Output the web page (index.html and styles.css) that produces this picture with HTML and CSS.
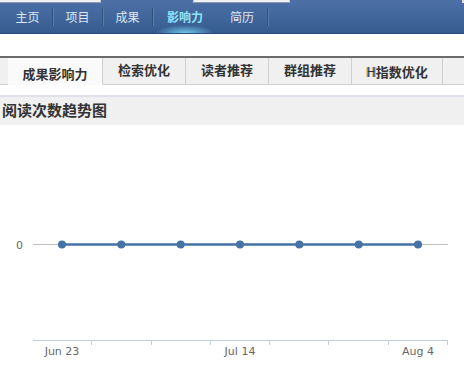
FILE: index.html
```html
<!DOCTYPE html>
<html>
<head>
<meta charset="utf-8">
<link rel="stylesheet" href="styles.css">
</head>
<body>
<div class="nav">
  <div class="strip">
    <span class="gap g1"></span>
    <span class="blk b1"></span>
    <span class="gap g2"></span>
    <span class="blk b2"></span>
    <span class="gap g3"></span>
  </div>
  <ul class="menu">
    <li class="w50">主页</li>
    <li class="w50">项目</li>
    <li class="w50">成果</li>
    <li class="on">影响力</li>
    <li class="w51">简历</li>
  </ul>
</div>
<div class="tabs">
  <span class="pad"></span>
  <span class="tab active">成果影响力</span>
  <span class="tab">检索优化</span>
  <span class="tab">读者推荐</span>
  <span class="tab">群组推荐</span>
  <span class="tab wide"><i class="h">H</i>指数优化</span>
  <span class="rest"></span>
</div>
<div class="sect">阅读次数趋势图</div>
<div class="chart">
  <svg width="464" height="252" viewBox="0 124 464 252">
    <defs>
      <filter id="sh" x="-5%" y="-50%" width="110%" height="300%">
        <feGaussianBlur stdDeviation="1"/>
      </filter>
    </defs>
    <text x="23" y="248" class="ylab" text-anchor="end">0</text>
    <line x1="33" y1="243.5" x2="448" y2="243.5" stroke="#c0c0c0" stroke-width="1"/>
    <polyline points="62,245.5 418,245.5" stroke="#000" stroke-opacity="0.12" stroke-width="4" fill="none" filter="url(#sh)"/>
    <line x1="62" y1="243.5" x2="418" y2="243.5" stroke="#4572a7" stroke-width="2.5"/>
    <g fill="#4572a7">
      <circle cx="62" cy="243.5" r="4"/>
      <circle cx="121.3" cy="243.5" r="4"/>
      <circle cx="180.7" cy="243.5" r="4"/>
      <circle cx="240" cy="243.5" r="4"/>
      <circle cx="299.3" cy="243.5" r="4"/>
      <circle cx="358.7" cy="243.5" r="4"/>
      <circle cx="418" cy="243.5" r="4"/>
    </g>
    <line x1="33" y1="339.5" x2="448" y2="339.5" stroke="#c0d0e0" stroke-width="1"/>
    <g stroke="#c0d0e0" stroke-width="1">
      <line x1="91.5" y1="339" x2="91.5" y2="344"/>
      <line x1="151.5" y1="339" x2="151.5" y2="344"/>
      <line x1="210.5" y1="339" x2="210.5" y2="344"/>
      <line x1="269.5" y1="339" x2="269.5" y2="344"/>
      <line x1="328.5" y1="339" x2="328.5" y2="344"/>
      <line x1="388.5" y1="339" x2="388.5" y2="344"/>
      <line x1="447.5" y1="339" x2="447.5" y2="344"/>
    </g>
    <text x="62" y="354" class="xlab" text-anchor="middle">Jun 23</text>
    <text x="240" y="354" class="xlab" text-anchor="middle">Jul 14</text>
    <text x="418" y="354" class="xlab" text-anchor="middle">Aug 4</text>
  </svg>
</div>
</body>
</html>
```
FILE: styles.css
```css
html, body {
  margin: 0;
  padding: 0;
  background: #fff;
  font-family: "Noto Sans CJK SC", "Noto Sans", sans-serif;
}
.nav {
  height: 34px;
  background: linear-gradient(#4d71a6, #3a5f94 85%, #34598d);
  border-bottom: 1px solid #2d4d7e;
  box-sizing: border-box;
  position: relative;
}
.strip {
  display: flex;
  height: 3px;
}
.gap { background: #f2f2f2; border-bottom: 1px solid #8a99b0; border-right: 1px solid #c8c8c8; box-sizing: border-box; }
.g1 { width: 101px; }
.b1 { width: 92px; }
.g2 { width: 97px; border-left: 1px solid #c8c8c8; }
.b2 { flex: 1; }
.g3 { width: 2px; background: #ddd; border: none; }
.menu {
  list-style: none;
  margin: 0;
  padding: 0 0 0 3px;
  display: flex;
  height: 28px;
  align-items: center;
}
.menu li {
  text-align: center;
  color: #dfe8f4;
  font-size: 12px;
  line-height: 18px;
  border-right: 1px solid #2f507f;
  box-shadow: 1px 0 0 #5a7cae;
  position: relative;
  box-sizing: border-box;
}
.menu li.w50 { width: 50px; }
.menu li.w51 { width: 51px; }
.menu li.on {
  width: 64px;
  color: #8fe4fb;
  font-weight: bold;
  border-right: none;
  box-shadow: none;
}
.menu li.on::after {
  content: "";
  position: absolute;
  left: 2px;
  right: 2px;
  top: 17px;
  height: 8px;
  background: radial-gradient(ellipse at 50% 100%, rgba(120,220,250,0.85), rgba(120,220,250,0) 70%);
}
.tabs {
  margin-top: 22px;
  display: flex;
  height: 29px;
  border-top: 2px solid #6b6b6b;
  box-sizing: border-box;
}
.tabs span {
  background: #f0f0f0;
  border-bottom: 1px solid #cfcfcf;
  box-sizing: border-box;
}
.pad { width: 8px; }
.tab {
  width: 83px;
  border-right: 1px solid #cfcfcf;
  font-size: 13px;
  font-weight: bold;
  color: #333;
  text-align: center;
  line-height: 24px;
}
.tab.active {
  width: 95px;
  background: #fafafa !important;
  border-bottom-color: #fafafa !important;
  padding-top: 3px;
  line-height: 25px;
}
.tab.wide { width: 91px; padding-top: 2px; }
.rest { flex: 1; }
.h { font-style: normal; font-weight: normal; color: #333; text-shadow: -1px 0 0 #e9b860, 1px 0 0 #7aa0d8; }
.sect {
  margin-top: 10px;
  border-top: 2px solid #e0e0e8;
  background: #f0f0f0;
  height: 28px;
  line-height: 26px;
  padding-left: 2px;
  font-size: 15px;
  font-weight: bold;
  color: #333;
}
.chart { height: 251px; }
.chart svg { display: block; }
.ylab { font-family: "DejaVu Sans", sans-serif; font-size: 11px; fill: #666; }
.xlab { font-family: "DejaVu Sans", sans-serif; font-size: 11px; fill: #666; }
```
